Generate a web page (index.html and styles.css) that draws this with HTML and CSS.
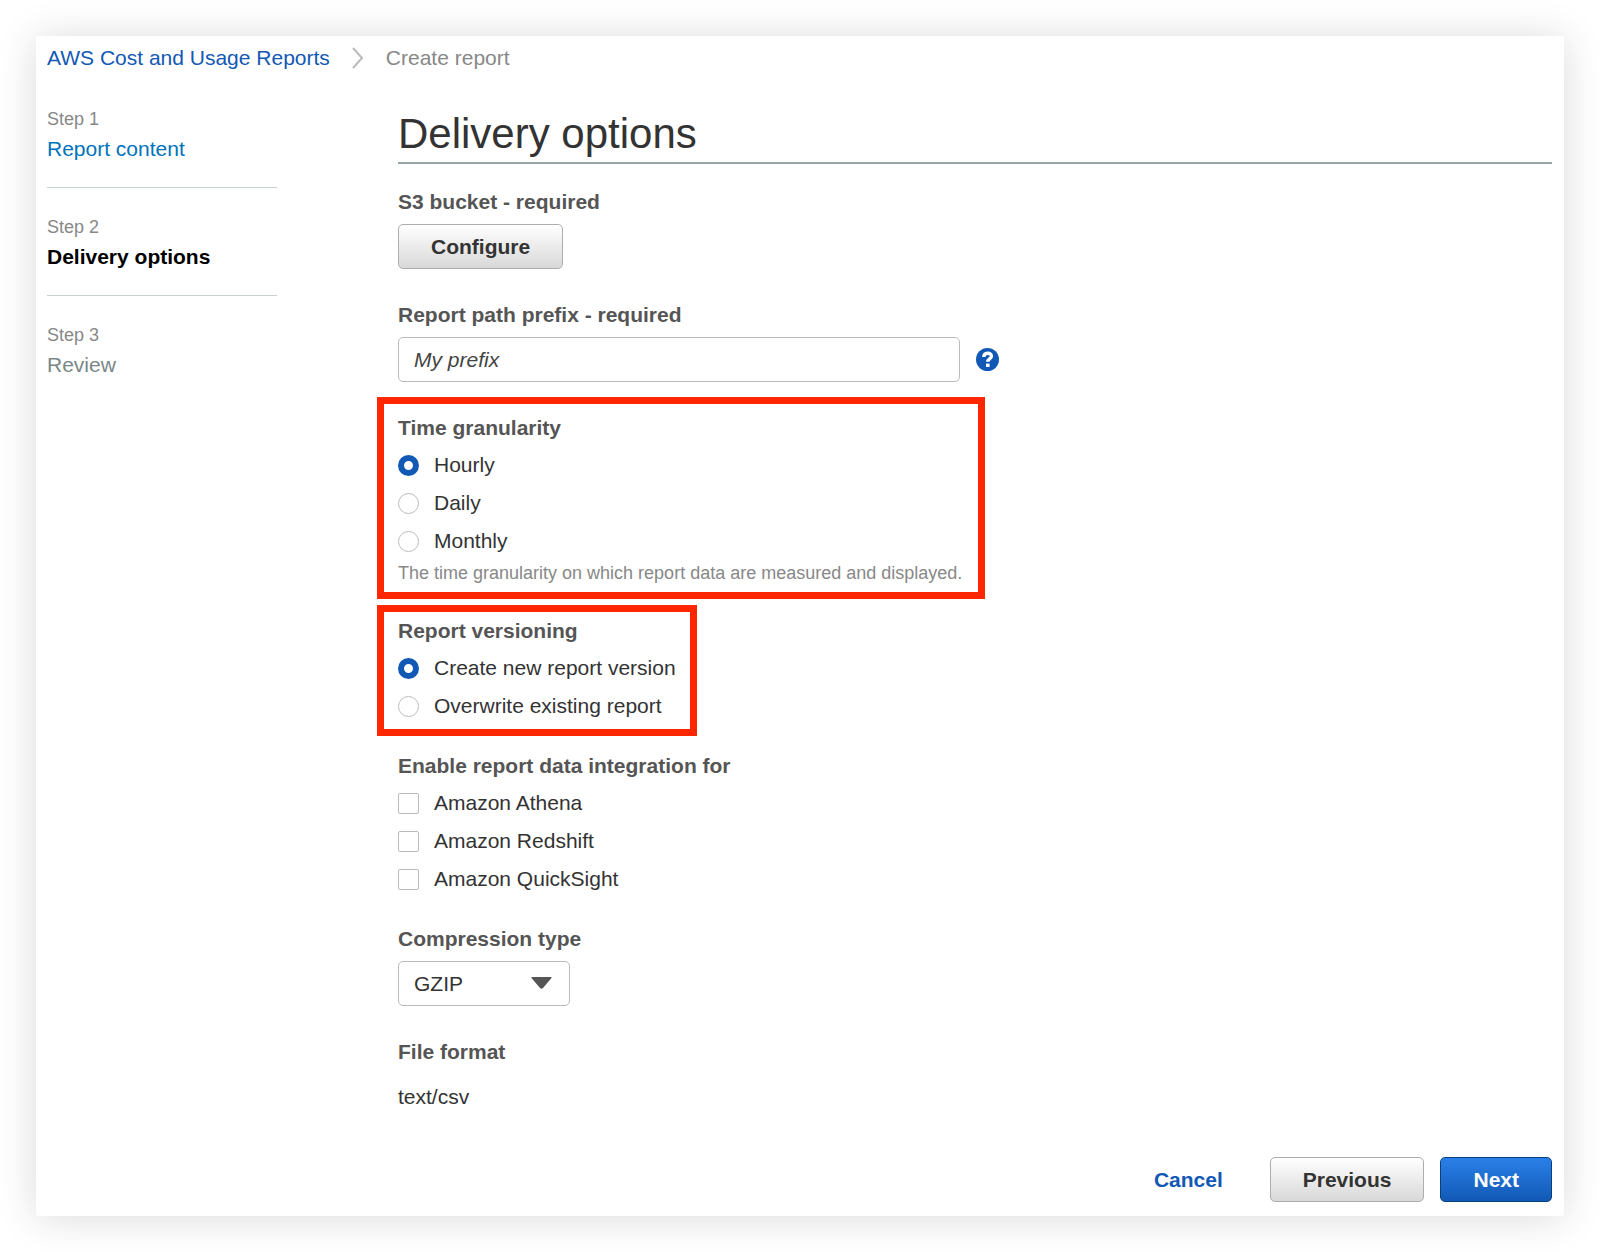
FILE: index.html
```html
<!DOCTYPE html>
<html lang="en">

<head>
  <meta charset="utf-8">
  <title>AWS Cost and Usage Reports - Create report</title>
  <meta name="viewport" content="width=device-width, initial-scale=1">
  <link rel="stylesheet" href="styles.css">
</head>

<body>
  <div class="card">
    <nav class="breadcrumb" aria-label="Breadcrumb">
      <a href="#">AWS Cost and Usage Reports</a>
      <svg width="12" height="22" viewBox="0 0 12 22" fill="none" stroke="#bbb" stroke-width="2">
        <path d="M1 1l9 10-9 10" />
      </svg>
      <span>Create report</span>
    </nav>

    <div class="wizard">
      <ol class="steps">
        <li>
          <small>Step 1</small>
          <a href="#">Report content</a>
        </li>
        <li class="active">
          <small>Step 2</small>
          <span>Delivery options</span>
        </li>
        <li>
          <small>Step 3</small>
          <span>Review</span>
        </li>
      </ol>

      <form>
        <h1>Delivery options</h1>

        <div class="field">
          <label class="title" for="configure">S3 bucket - required</label>
          <button type="button" id="configure">Configure</button>
        </div>

        <div class="field">
          <label class="title" for="prefix">Report path prefix - required</label>
          <div class="input-row">
            <input type="text" id="prefix" placeholder="My prefix">
            <svg width="23" height="23" viewBox="0 0 23 23" role="img" aria-label="Help">
              <circle cx="11.5" cy="11.5" r="11.5" fill="#1259b5" />
              <path d="M7.8 9c0-5 7.6-4.8 7.6-.8 0 2.8-3.600 2.700-3.600 5.600" fill="none" stroke="#fff" stroke-width="3.400" />
              <path d="M10 15.600h3.600v3.400h-3.600z" fill="#fff" />
            </svg>
          </div>
        </div>

        <fieldset class="highlight granularity">
          <legend class="title">Time granularity</legend>
          <label class="option"><input type="radio" name="granularity" checked>Hourly</label>
          <label class="option"><input type="radio" name="granularity">Daily</label>
          <label class="option"><input type="radio" name="granularity">Monthly</label>
          <p class="hint">The time granularity on which report data are measured and displayed.</p>
        </fieldset>

        <fieldset class="highlight versioning">
          <legend class="title">Report versioning</legend>
          <label class="option"><input type="radio" name="versioning" checked>Create new report version</label>
          <label class="option"><input type="radio" name="versioning">Overwrite existing report</label>
        </fieldset>

        <fieldset class="integration">
          <legend class="title">Enable report data integration for</legend>
          <label class="option"><input type="checkbox">Amazon Athena</label>
          <label class="option"><input type="checkbox">Amazon Redshift</label>
          <label class="option"><input type="checkbox">Amazon QuickSight</label>
        </fieldset>

        <div class="field">
          <label class="title" for="compression">Compression type</label>
          <div class="select">
            <select id="compression">
              <option>GZIP</option>
              <option>Parquet</option>
            </select>
            <svg width="21" height="12" viewBox="0 0 21 12" fill="#555">
              <path d="M1 0h19q1 0 .5 1L12 11q-1.500 1.500-3 0L.5 1Q0 0 1 0z" />
            </svg>
          </div>
        </div>

        <div class="field">
          <h2 class="title">File format</h2>
          <p class="value">text/csv</p>
        </div>

        <div class="actions">
          <a href="#">Cancel</a>
          <button type="button">Previous</button>
          <button type="submit" class="primary">Next</button>
        </div>
      </form>
    </div>
  </div>
</body>

</html>
```
FILE: styles.css
```css
* {
  box-sizing: border-box;
  margin: 0;
  padding: 0;
}

body {
  padding: 36px;
  background: #fff;
  color: #333;
  font-family: "Liberation Sans", Helvetica, Arial, sans-serif;
  font-size: 21px;
  line-height: 24px;
}

a {
  color: #1259b5;
  text-decoration: none;
}

.card {
  padding: 10px 12px 14px 11px;
  border-radius: 2px;
  background: #fff;
  box-shadow: 0 2px 40px rgba(0, 0, 0, 0.15);
}

.breadcrumb {
  display: flex;
  align-items: center;
  color: #888;
}

.breadcrumb svg {
  margin: 0 22px;
}

.wizard {
  display: flex;
  margin-top: 37px;
}

.steps {
  flex: none;
  width: 230px;
  margin-right: 121px;
  list-style: none;
}

.steps li {
  padding-bottom: 26px;
  border-bottom: 1px solid #c8d1d1;
}

.steps li + li {
  padding-top: 27px;
}

.steps li:last-child {
  border-bottom: none;
  color: #7a8787;
}

.steps small {
  display: block;
  margin-bottom: 6px;
  color: #888;
  font-size: 18px;
}

.steps a {
  color: #0073bb;
}

.steps .active {
  color: #000;
  font-weight: bold;
}

.active small {
  font-weight: normal;
}

form {
  flex: 1;
  min-width: 0;
}

h1 {
  padding: 3px 0 4px;
  border-bottom: 2px solid #95a5a6;
  font-size: 42px;
  font-weight: normal;
  line-height: 48px;
}

.title {
  display: block;
  margin-bottom: 10px;
  color: #555;
  font-size: 21px;
  font-weight: bold;
}

.field {
  margin-bottom: 34px;
}

h1 + .field {
  margin-top: 26px;
}

button {
  height: 45px;
  padding: 0 32px;
  border: 1px solid #adadad;
  border-radius: 5px;
  background: linear-gradient(#fff, #d8d8d8);
  color: #333;
  font: inherit;
  font-weight: bold;
  cursor: pointer;
}

.primary {
  border-color: #07427f;
  background: linear-gradient(#2a80e8, #1259b5);
  color: #fff;
}

.input-row {
  display: flex;
  align-items: center;
  gap: 16px;
}

input[type="text"],
select {
  height: 45px;
  padding: 0 15px;
  border: 1px solid #bbb;
  border-radius: 5px;
  background: #fff;
  color: #333;
  font: inherit;
}

input[type="text"] {
  width: 562px;
  max-width: 100%;
}

input::placeholder {
  color: #444;
  font-style: italic;
}

fieldset {
  border: none;
}

/* floated so the legend sits inside the border */
fieldset .title {
  float: left;
  margin-bottom: 6px;
}

/* the two groups to look at are framed in red */
.highlight {
  width: fit-content;
  margin-left: -21px;
  border: 7px solid #ff2600;
}

.granularity {
  margin-top: -19px;
  padding: 12px 16px 6px 14px;
}

.versioning {
  margin-top: 6px;
  padding: 7px 14px 4px;
}

.integration {
  margin: 18px 0 29px;
}

.option {
  display: flex;
  align-items: center;
  gap: 15px;
  clear: both;
  height: 38px;
}

.option input {
  appearance: none;
  width: 21px;
  height: 21px;
  border: 1px solid #bbb;
  border-radius: 2px;
  background: #fff;
}

.option input[type="radio"] {
  border-radius: 50%;
}

.option input[type="radio"]:checked {
  border: 6px solid #1259b5;
}

.hint {
  color: #888;
  font-size: 18px;
  line-height: 26px;
}

.select {
  position: relative;
  width: 172px;
}

select {
  appearance: none;
  width: 100%;
}

.select svg {
  position: absolute;
  top: 16px;
  right: 18px;
  pointer-events: none;
}

.value {
  margin-top: 21px;
}

.actions {
  display: flex;
  align-items: center;
  justify-content: flex-end;
  gap: 16px;
  margin-top: 48px;
}

.actions a {
  margin-right: 31px;
  font-weight: bold;
}
```
